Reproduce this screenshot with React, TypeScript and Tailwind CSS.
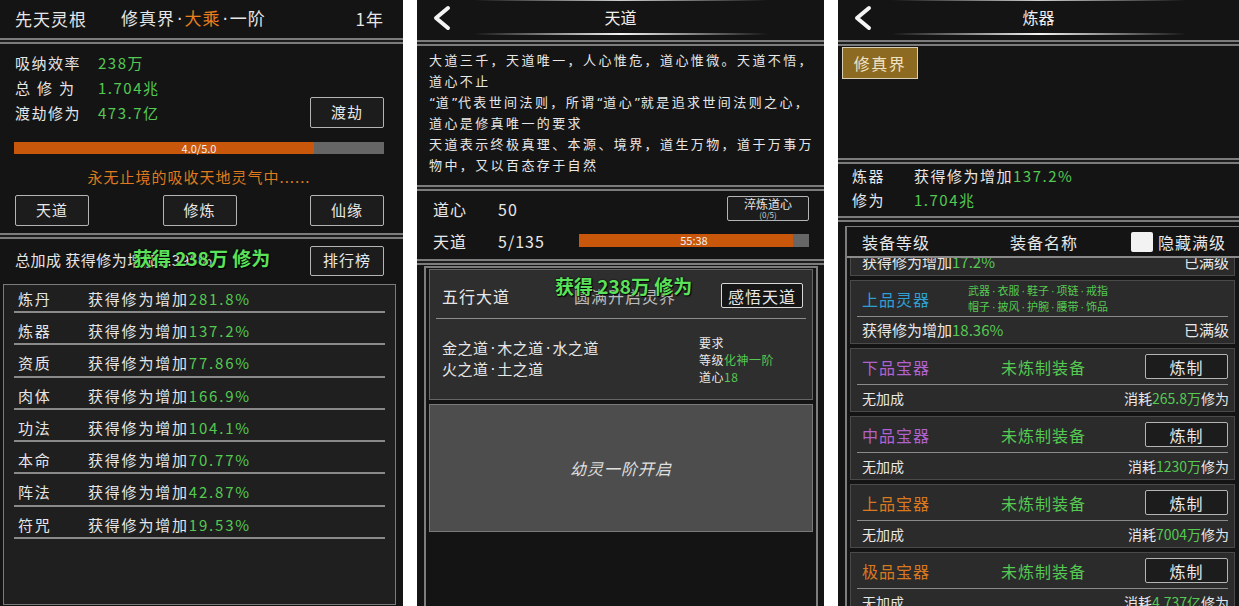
import React from 'react';

const green = 'text-[#55c952]';

// narrow latin punctuation inside CJK text
const D = () => <span className="mx-[2px] font-['DejaVu_Sans'] tracking-normal">·</span>;
const Q = ({ children }: { children: React.ReactNode }) => (
  <span className="font-['DejaVu_Sans'] tracking-normal">{children}</span>
);

const Sep = () => <div className="h-[6px] shrink-0 border-y-2 border-[#7c7c7c] bg-[#1c1c1c]" />;

const Chevron = () => (
  <svg width="22" height="26" viewBox="0 0 22 26">
    <path d="M17 3 L5 13 L17 23" fill="none" stroke="#f4f4f4" strokeWidth="4" strokeLinecap="round" strokeLinejoin="round" />
  </svg>
);

const Toast = ({ className }: { className: string }) => (
  <div
    className={`pointer-events-none absolute whitespace-nowrap text-[19px] leading-[30px] font-bold text-[#5be25a] [text-shadow:0_0_2px_#000,1px_1px_1px_#000] ${className}`}
  >
    获得 238万 修为
  </div>
);

const NavHeader = ({ title }: { title: string }) => (
  <div className="flex h-[40px] shrink-0 flex-col">
    <div className="mx-auto h-px w-[294px] bg-linear-to-r from-transparent via-[#cfcfcf] to-transparent" />
    <div className="grid h-[32px] grid-cols-[60px_1fr_60px] items-center text-[16px] text-[#eeeeee]">
      <div className="pl-[14px] pt-[2px]">
        <Chevron />
      </div>
      <div className="text-center">{title}</div>
      <div />
    </div>
    <div className="mx-auto h-[2px] w-[294px] bg-linear-to-r from-transparent via-[#f5f5f5] to-transparent" />
  </div>
);

const Btn = ({ children, className = '' }: { children: React.ReactNode; className?: string }) => (
  <div
    className={`flex items-center justify-center rounded-[2px] border border-[#b4b4b4] bg-[#1c1c1c] text-[#e8e8e8] ${className}`}
  >
    {children}
  </div>
);

const bonuses = [
  ['炼丹', '281.8%'],
  ['炼器', '137.2%'],
  ['资质', '77.86%'],
  ['肉体', '166.9%'],
  ['功法', '104.1%'],
  ['本命', '70.77%'],
  ['阵法', '42.87%'],
  ['符咒', '19.53%'],
];

function Panel1() {
  return (
    <div className="flex h-full w-[403px] shrink-0 flex-col overflow-hidden bg-[#141414] text-[#e6e6e6]">
      <div className="flex h-[38px] shrink-0 items-center pl-[15px] pr-[19px] text-[17px] tracking-[1px]">
        <span>先天灵根</span>
        <span className="ml-[34px]">
          修真界<D />
          <span className="text-[#e8801e]">大乘</span>
          <D />一阶
        </span>
        <span className="ml-auto">1年</span>
      </div>
      <Sep />
      <div className="flex h-[189px] shrink-0 flex-col pl-[14px] pr-[19px]">
        <div className="mt-[7px] flex items-end justify-between">
          <div className="flex flex-col pl-px text-[15px] tracking-[1.5px]">
            <div className="flex h-[25px] items-center">
              <span className="w-[83px]">吸纳效率</span>
              <span className={green}>238万</span>
            </div>
            <div className="flex h-[25px] items-center">
              <span className="w-[83px] tracking-[7px]">总修为</span>
              <span className={green}>1.704兆</span>
            </div>
            <div className="flex h-[25px] items-center">
              <span className="w-[83px]">渡劫修为</span>
              <span className={green}>473.7亿</span>
            </div>
          </div>
          <Btn className="h-[31px] w-[74px] translate-y-[2px] text-[15px] tracking-[1px]">渡劫</Btn>
        </div>
        <div className="relative mt-[16px] flex h-[12px] bg-[#666666]">
          <div className="h-full w-[81%] bg-[#c8560b]" />
          <div className="absolute inset-0 flex items-center justify-center text-[11px] leading-none text-[#f0f0f0]">
            4.0/5.0
          </div>
        </div>
        <div className="mt-[13px] text-center text-[15px] leading-[20px] tracking-[1px] text-[#df7a1e]">
          永无止境的吸收天地灵气中......
        </div>
        <div className="mt-[8px] flex justify-between pl-px">
          <Btn className="h-[31px] w-[74px] text-[15px] tracking-[1px]">天道</Btn>
          <Btn className="h-[31px] w-[74px] text-[15px] tracking-[1px]">修炼</Btn>
          <Btn className="h-[31px] w-[74px] text-[15px] tracking-[1px]">仙缘</Btn>
        </div>
      </div>
      <Sep />
      <div className="relative flex h-[43px] shrink-0 items-center justify-between pl-[15px] pr-[19px]">
        <span className="text-[15px] tracking-[0.5px]">总加成 获得修为增加2.395%</span>
        <Btn className="h-[30px] w-[74px] text-[15px] tracking-[1px]">排行榜</Btn>
        <Toast className="left-[133px] top-[4px]" />
      </div>
      <div className="mb-[1px] ml-[3px] mr-[7px] mt-[2px] flex flex-1 flex-col border border-[#7a7a7a] bg-[#1f1f1f] px-[10px]">
        {bonuses.map(([k, v], i) => (
          <div
            key={k}
            className={`flex shrink-0 items-start border-b-2 border-[#8a8a8a] pl-[4px] text-[15px] leading-[24px] tracking-[1.8px] ${
              i === 0 ? 'h-[28px] pt-[2px]' : 'h-[32.3px] pt-[6px]'
            }`}
          >
            <span className="w-[70px]">{k}</span>
            <span>
              获得修为增加<span className={green}>{v}</span>
            </span>
          </div>
        ))}
      </div>
    </div>
  );
}

function Panel2() {
  return (
    <div className="flex h-full w-[407px] shrink-0 flex-col overflow-hidden bg-[#141414] text-[#e8e8e8]">
      <NavHeader title="天道" />
      <Sep />
      <div className="h-[139px] shrink-0 whitespace-nowrap pl-[12px] pt-[4px] text-[13px] leading-[20.8px] tracking-[2.4px]">
        <div>大道三千，天道唯一，人心惟危，道心惟微。天道不悟，</div>
        <div>道心不止</div>
        <div>
          <Q>“</Q>道<Q>”</Q>代表世间法则，所谓<Q>“</Q>道心<Q>”</Q>就是追求世间法则之心，
        </div>
        <div>道心是修真唯一的要求</div>
        <div>天道表示终极真理、本源、境界，道生万物，道于万事万</div>
        <div>物中，又以百态存于自然</div>
      </div>
      <Sep />
      <div className="flex h-[68px] shrink-0 flex-col px-[15px] text-[16px] tracking-[1px]">
        <div className="mt-[5px] flex h-[25px] items-center">
          <span className="w-[66px] pl-px">道心</span>
          <span>50</span>
          <div className="ml-auto flex h-[25px] w-[82px] flex-col items-center justify-center rounded-[2px] border border-[#b4b4b4] bg-[#1c1c1c] leading-none tracking-normal">
            <span className="text-[12px]">淬炼道心</span>
            <span className="mt-[1px] text-[8px] text-[#cfcfcf]">(0/5)</span>
          </div>
        </div>
        <div className="mt-[7px] flex h-[25px] items-center">
          <span className="w-[66px] pl-px">天道</span>
          <span className="w-[81px]">5/135</span>
          <div className="relative flex h-[13px] flex-1 bg-[#666666]">
            <div className="h-full w-[93%] bg-[#c8560b]" />
            <div className="absolute inset-0 flex items-center justify-center text-[11px] leading-none tracking-normal text-[#f0f0f0]">
              55:38
            </div>
          </div>
        </div>
      </div>
      <Sep />
      <div className="ml-[7px] mr-[6px] mt-px flex flex-1 flex-col gap-[4px] border-2 border-b-0 border-[#7d7d7d] bg-[#141414] px-[3px] pt-px">
        <div className="relative flex h-[131px] shrink-0 flex-col border border-[#666666] bg-[#2e2e2e]">
          <div className="flex h-[48px] items-center pl-[12px] pr-[9px] pt-[3px] text-[16px] tracking-[1px]">
            <span>五行大道</span>
            <span className="ml-[64px] text-[#bdbdbd]">圆满开启灵界</span>
            <Btn className="ml-auto h-[25px] w-[82px] text-[16px] tracking-[1px] border-[#d8d8d8] bg-[#161616]">感悟天道</Btn>
          </div>
          <div className="mx-[6px] h-px bg-[#8c8c8c]" />
          <div className="flex flex-1 items-center pl-[12px]">
            <div className="w-[257px] text-[15px] leading-[19px] tracking-[0.5px]">
              <div>
                金之道<D />木之道<D />水之道
              </div>
              <div>
                火之道<D />土之道
              </div>
            </div>
            <div className="text-[12px] leading-[17px] tracking-[0.5px]">
              <div>要求</div>
              <div>
                等级<span className={green}>化神一阶</span>
              </div>
              <div>
                道心<span className={green}>18</span>
              </div>
            </div>
          </div>
          <Toast className="left-[125px] top-[1px]" />
        </div>
        <div className="flex h-[128px] shrink-0 items-center justify-center border border-[#7a7a7a] bg-[#4d4d4d] text-[16px] italic tracking-[1px] text-[#e0e0e0]">
          幼灵一阶开启
        </div>
      </div>
    </div>
  );
}

const gear = [
  { name: '下品宝器', color: 'text-[#b062cf]', cost: '265.8万' },
  { name: '中品宝器', color: 'text-[#b062cf]', cost: '1230万' },
  { name: '上品宝器', color: 'text-[#d9781f]', cost: '7004万' },
  { name: '极品宝器', color: 'text-[#d9781f]', cost: '4.737亿' },
];

function Panel3() {
  return (
    <div className="flex h-full min-w-0 flex-1 flex-col overflow-hidden bg-[#141414] text-[#e8e8e8]">
      <NavHeader title="炼器" />
      <Sep />
      <div className="h-[112px] shrink-0 pl-[4px] pt-px">
        <div className="flex h-[32px] w-[76px] items-center justify-center border border-[#d9cfb4] bg-[#8c6a22] text-[16px] tracking-[1.5px] text-[#efe3c4]">
          修真界
        </div>
      </div>
      <Sep />
      <div className="flex h-[52px] shrink-0 flex-col pl-[14px] text-[15px] tracking-[1.5px]">
        <div className="flex h-[24px] items-center">
          <span className="w-[62px]">炼器</span>
          <span>
            获得修为增加<span className={green}>137.2%</span>
          </span>
        </div>
        <div className="flex h-[24px] items-center">
          <span className="w-[62px]">修为</span>
          <span className={green}>1.704兆</span>
        </div>
      </div>
      <Sep />
      <div className="ml-[7px] mt-[4px] flex min-h-0 flex-1 flex-col border-l-2 border-t border-[#7d7d7d]">
        <div className="flex h-[31px] shrink-0 items-center border-b-2 border-[#8a8a8a] bg-[#141414] pl-[15px] text-[16px] tracking-[1px]">
          <span className="w-[148px]">装备等级</span>
          <span>装备名称</span>
          <span className="ml-[53px] h-[20px] w-[22px] rounded-[2px] bg-[#f2f2f2]" />
          <span className="ml-[5px]">隐藏满级</span>
        </div>
        <div className="flex min-h-0 flex-1 flex-col gap-[4px] overflow-hidden pl-[3px] pr-[4px]">
          <div className="mt-[-46px] flex h-[64px] shrink-0 flex-col border border-[#4a4a4a] bg-[#2b2b2b]">
            <div className="h-[35px]" />
            <div className="mx-[6px] h-px bg-[#8a8a8a]" />
            <div className="flex flex-1 items-center justify-between pl-[11px] pr-[5px] text-[15px]">
              <span>
                获得修为增加<span className={green}>17.2%</span>
              </span>
              <span>已满级</span>
            </div>
          </div>
          <div className="flex h-[64px] shrink-0 flex-col border border-[#4a4a4a] bg-[#2b2b2b]">
            <div className="flex h-[35px] items-center pl-[11px]">
              <span className="w-[106px] text-[16px] tracking-[1px] text-[#2f9fd2]">上品灵器</span>
              <div className={`text-[11px] leading-[15px] ${green}`}>
                <div>
                  武器<D />衣服<D />鞋子<D />项链<D />戒指
                </div>
                <div>
                  帽子<D />披风<D />护腕<D />腰带<D />饰品
                </div>
              </div>
            </div>
            <div className="mx-[6px] h-px bg-[#8a8a8a]" />
            <div className="flex flex-1 items-center justify-between pl-[11px] pr-[5px] text-[15px]">
              <span>
                获得修为增加<span className={green}>18.36%</span>
              </span>
              <span>已满级</span>
            </div>
          </div>
          {gear.map((g) => (
            <div key={g.name} className="flex h-[64px] shrink-0 flex-col border border-[#4a4a4a] bg-[#2b2b2b]">
              <div className="flex h-[35px] items-center pl-[11px] pr-[6px] text-[16px] tracking-[1px]">
                <span className={`w-[139px] ${g.color}`}>{g.name}</span>
                <span className={green}>未炼制装备</span>
                <Btn className="ml-auto h-[25px] w-[83px] text-[16px] tracking-[1px] bg-[#1a1a1a]">炼制</Btn>
              </div>
              <div className="mx-[6px] h-px bg-[#8a8a8a]" />
              <div className="flex flex-1 items-center justify-between pl-[11px] pr-[5px] text-[14px]">
                <span>无加成</span>
                <span>
                  消耗<span className={green}>{g.cost}</span>修为
                </span>
              </div>
            </div>
          ))}
        </div>
      </div>
    </div>
  );
}

export default function App() {
  return (
    <div className="flex h-[606px] w-[1239px] overflow-hidden bg-white font-['Noto_Sans_CJK_SC','Noto_Sans',sans-serif]">
      <Panel1 />
      <div className="w-[14px] shrink-0" />
      <Panel2 />
      <div className="w-[14px] shrink-0" />
      <Panel3 />
    </div>
  );
}
